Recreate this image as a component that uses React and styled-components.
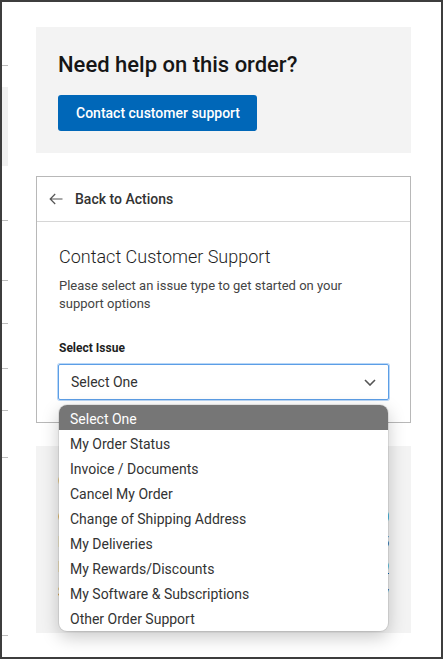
import React, { useState } from 'react';
import styled, { createGlobalStyle } from 'styled-components';

const issues = [
  'Select One',
  'My Order Status',
  'Invoice / Documents',
  'Cancel My Order',
  'Change of Shipping Address',
  'My Deliveries',
  'My Rewards/Discounts',
  'My Software & Subscriptions',
  'Other Order Support',
];

// faint edges of the page sitting behind the side panel
const railMarks = [
  { kind: 'tick', gap: 63 },
  { kind: 'block', gap: 21, size: 79 },
  { kind: 'tick', gap: 54 },
  { kind: 'tick', gap: 59 },
  { kind: 'tick', gap: 42 },
  { kind: 'tick', gap: 44 },
  { kind: 'tick', gap: 41 },
  { kind: 'tick', gap: 46 },
  { kind: 'tick', gap: 177 },
];

const summaryRows = [
  { label: 'Order Number', value: '7000123450', link: true },
  { label: 'Invoice Date', value: '04/22/2025' },
  { label: 'PO Number', value: 'PO-88213409', link: true, underline: true },
  { label: 'Ship Method', value: 'Standard Delivery' },
];

export default function App() {
  const [active, setActive] = useState(0);

  return (
    <>
      <GlobalStyle />
      <Frame>
        <Rail>
          {railMarks.map((m, i) =>
            m.kind === 'tick' ? (
              <RailTick key={i} $gap={m.gap} />
            ) : (
              <RailBlock key={i} $gap={m.gap} $size={m.size} />
            )
          )}
        </Rail>

        <Column>
          <HelpCard>
            <HelpTitle>Need help on this order?</HelpTitle>
            <PrimaryButton>Contact customer support</PrimaryButton>
          </HelpCard>

          <SupportCard>
            <BackRow>
              <svg width='14' height='12' viewBox='0 0 14 12' fill='none'>
                <path
                  d='M13.5 6H1.2M6.2 1L1.2 6l5 5'
                  stroke='#555'
                  strokeWidth='1.2'
                />
              </svg>
              Back to Actions
            </BackRow>
            <SupportBody>
              <SupportTitle>Contact Customer Support</SupportTitle>
              <SupportText>
                Please select an issue type to get started on your support
                options
              </SupportText>
              <FieldLabel>Select Issue</FieldLabel>
              <SelectWrap>
                <SelectBox>
                  {issues[active]}
                  <svg width='12' height='7' viewBox='0 0 12 7' fill='none'>
                    <path d='M1 1l5 5 5-5' stroke='#555' strokeWidth='1.6' />
                  </svg>
                </SelectBox>
                <OptionList>
                  {issues.map((issue, i) => (
                    <OptionItem
                      key={issue}
                      $active={i === active}
                      onClick={() => setActive(i)}
                    >
                      {issue}
                    </OptionItem>
                  ))}
                </OptionList>
              </SelectWrap>
            </SupportBody>
          </SupportCard>

          <SummaryCard>
            <SummaryTitle>Order Details</SummaryTitle>
            {summaryRows.map((row) => (
              <SummaryRow key={row.label}>
                <span>{row.label}</span>
                <SummaryValue $link={row.link} $underline={row.underline}>
                  {row.value}
                </SummaryValue>
              </SummaryRow>
            ))}
          </SummaryCard>
        </Column>
      </Frame>
    </>
  );
}

// |-----Styling-----|
const GlobalStyle = createGlobalStyle`
  html, body {
    margin: 0;
    padding: 0;
    background: #fff;
  }
  body {
    font-family: Roboto, "Liberation Sans", Arial, sans-serif;
    color: #222;
  }
`;

const Frame = styled.div`
  width: 443px;
  height: 659px;
  box-sizing: border-box;
  border: 2px solid #3d3d3d;
  background: #fff;
  display: flex;
  overflow: hidden;
`;

const Rail = styled.div`
  width: 6px;
  flex-shrink: 0;
  display: flex;
  flex-direction: column;
`;

const RailTick = styled.div`
  margin-top: ${(p) => p.$gap}px;
  height: 1px;
  background: #bdbdbd;
`;

const RailBlock = styled.div`
  margin-top: ${(p) => p.$gap}px;
  height: ${(p) => p.$size}px;
  background: #f1f1f1;
`;

const Column = styled.div`
  flex: 1;
  margin: 25px 30px 0 28px;
  display: flex;
  flex-direction: column;
  gap: 23px;
`;

const HelpCard = styled.section`
  background: #f3f3f3;
  padding: 24px 22px 22px;
  display: flex;
  flex-direction: column;
  align-items: flex-start;
`;

const HelpTitle = styled.h2`
  margin: 0 0 16px;
  font-size: 22px;
  line-height: 28px;
  font-weight: 500;
  color: #161616;
`;

const PrimaryButton = styled.button`
  height: 36px;
  padding: 0 17px 0 18px;
  border: none;
  border-radius: 3px;
  background: #0067b8;
  color: #fff;
  font-family: inherit;
  font-size: 14px;
  font-weight: 500;
  cursor: pointer;
`;

const SupportCard = styled.section`
  border: 1px solid #b8b8b8;
  background: #fff;
`;

const BackRow = styled.div`
  height: 44px;
  border-bottom: 1px solid #d6d6d6;
  display: flex;
  align-items: center;
  gap: 12px;
  padding-left: 12px;
  font-size: 14px;
  font-weight: 500;
  color: #333;
`;

const SupportBody = styled.div`
  padding: 23px 21px 22px 22px;
`;

const SupportTitle = styled.h3`
  margin: 0 0 8px;
  font-size: 18px;
  line-height: 24px;
  font-weight: 300;
  color: #1e1e1e;
`;

const SupportText = styled.p`
  margin: 0 0 27px;
  font-size: 13px;
  line-height: 18px;
  color: #444;
`;

const FieldLabel = styled.div`
  font-size: 12px;
  line-height: 16px;
  font-weight: 700;
  color: #1e1e1e;
  margin-bottom: 8px;
`;

const SelectWrap = styled.div`
  position: relative;
  margin-left: -1px;
`;

const SelectBox = styled.div`
  height: 36px;
  box-sizing: border-box;
  border: 1px solid #5c9ee6;
  border-radius: 2px;
  box-shadow: 0 0 0 1px #b9d7f7;
  padding: 0 12px 0 12px;
  display: flex;
  align-items: center;
  justify-content: space-between;
  font-size: 14px;
  color: #333;
`;

const OptionList = styled.ul`
  position: absolute;
  top: calc(100% + 5px);
  left: 1px;
  right: 1px;
  z-index: 2;
  margin: 0;
  padding: 0 0 1px;
  list-style: none;
  background: #fff;
  border-radius: 8px;
  overflow: hidden;
  box-shadow: 0 6px 18px rgba(0, 0, 0, 0.22), 0 0 0 1px rgba(0, 0, 0, 0.08);
`;

const OptionItem = styled.li`
  height: 25px;
  box-sizing: border-box;
  padding: 3px 0 0 11px;
  display: flex;
  align-items: center;
  font-size: 14px;
  color: ${(p) => (p.$active ? '#fff' : '#333')};
  background: ${(p) => (p.$active ? '#767676' : 'transparent')};
  cursor: default;
`;

const SummaryCard = styled.section`
  background: #f3f3f3;
  height: 187px;
  box-sizing: border-box;
  padding: 23px 22px 0;
  display: flex;
  flex-direction: column;
`;

const SummaryTitle = styled.h3`
  margin: 0 0 12px;
  font-size: 18px;
  line-height: 24px;
  font-weight: 500;
  color: #5a3a1a;
`;

const SummaryRow = styled.div`
  display: flex;
  justify-content: space-between;
  height: 25px;
  line-height: 25px;
  font-size: 14px;
  color: #5a3a1a;
`;

const SummaryValue = styled.span`
  color: ${(p) => (p.$link ? '#0067b8' : '#333')};
  text-decoration: ${(p) => (p.$underline ? 'underline' : 'none')};
`;
